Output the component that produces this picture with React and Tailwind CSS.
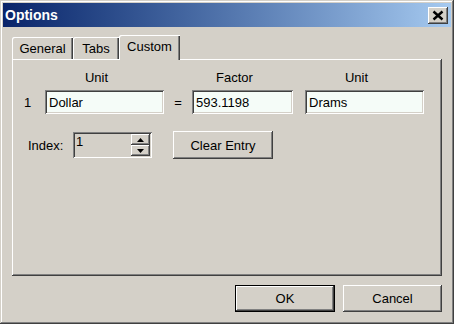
const raised = "shadow-[inset_-1px_-1px_#404040,inset_1px_1px_#ffffff,inset_-2px_-2px_#808080,inset_2px_2px_#d4d0c8]";
const sunken = "shadow-[inset_1px_1px_#808080,inset_-1px_-1px_#ffffff,inset_2px_2px_#404040,inset_-2px_-2px_#d4d0c8]";

function TextBox({ value, width }) {
  return (
    <div className={`${width} h-[24px] bg-[#f5fcf8] ${sunken} flex items-center pl-[4px]`}>
      {value}
    </div>
  );
}

function Tab({ label, width, active }) {
  if (active) {
    return (
      <div className={`${width} h-[25px] -mb-px relative z-10 bg-[#d4d0c8] rounded-tl-[2px] shadow-[inset_1px_1px_#ffffff,inset_-1px_0_#404040,inset_-2px_0_#808080] flex justify-center pt-[4px]`}>
        {label}
      </div>
    );
  }
  return (
    <div className={`${width} h-[22px] bg-[#d4d0c8] rounded-tl-[2px] shadow-[inset_1px_1px_#ffffff,inset_-1px_0_#404040,inset_-2px_0_#808080] flex justify-center pt-[4px]`}>
      {label}
    </div>
  );
}

export default function App() {
  return (
    <div className={`w-[454px] h-[324px] bg-[#d4d0c8] p-[3px] flex flex-col font-['Liberation_Sans',Arial,sans-serif] text-[13px] leading-[15px] text-black select-none shadow-[inset_-1px_-1px_#404040,inset_1px_1px_#d4d0c8,inset_-2px_-2px_#808080,inset_2px_2px_#ffffff]`}>
      {/* title bar */}
      <div className="h-[24px] flex items-center justify-between bg-linear-to-r from-[#0a246a] to-[#a6caf0] pl-[2px] pr-[3px]">
        <span className="text-white font-bold text-[14px]">Options</span>
        <div className={`w-[20px] h-[17px] bg-[#d4d0c8] ${raised} flex items-center justify-center`}>
          <svg width="12" height="11" viewBox="0 0 12 11">
            <path d="M1.5 1.5 L10.5 9.5 M10.5 1.5 L1.5 9.5" stroke="#000" strokeWidth="2.4" />
          </svg>
        </div>
      </div>

      <div className="flex-1 flex flex-col px-[9px] pt-[8px] pb-[9px]">
        {/* tabs */}
        <div className="h-[24px] flex items-end">
          <Tab label="General" width="w-[61px]" />
          <Tab label="Tabs" width="w-[46px]" />
          <Tab label="Custom" width="w-[61px]" active />
        </div>

        {/* panel */}
        <div className={`h-[217px] ${raised} pt-[11px]`}>
          <div className="flex pl-[33px]">
            <div className="w-[103px] text-center">Unit</div>
            <div className="w-[44px]" />
            <div className="w-[85px] text-center">Factor</div>
            <div className="w-[28px]" />
            <div className="w-[103px] text-center">Unit</div>
          </div>

          <div className="flex items-center pl-[12px] mt-[5px]">
            <div className="w-[21px]">1</div>
            <TextBox value="Dollar" width="w-[119px]" />
            <div className="w-[28px] text-center">=</div>
            <TextBox value="593.1198" width="w-[101px]" />
            <div className="w-[12px]" />
            <TextBox value="Drams" width="w-[119px]" />
          </div>

          <div className="flex items-center pl-[16px] mt-[17px]">
            <div className="w-[35px]">Index:</div>
            <div className={`ml-[10px] w-[79px] h-[26px] ${sunken} flex`}>
              <div className="flex-1 pl-[3px] pt-[2px]">1</div>
              <div className="w-[19px] flex flex-col py-[2px] mr-[2px]">
                <div className={`flex-1 bg-[#d4d0c8] ${raised} flex items-center justify-center`}>
                  <svg width="7" height="4" viewBox="0 0 7 4"><path d="M3.5 0 L7 4 L0 4 Z" fill="#000" /></svg>
                </div>
                <div className={`flex-1 bg-[#d4d0c8] ${raised} flex items-center justify-center`}>
                  <svg width="7" height="4" viewBox="0 0 7 4"><path d="M0 0 L7 0 L3.5 4 Z" fill="#000" /></svg>
                </div>
              </div>
            </div>
            <div className={`ml-[21px] w-[100px] h-[28px] ${raised} flex items-center justify-center`}>
              Clear Entry
            </div>
          </div>
        </div>

        {/* dialog buttons */}
        <div className="mt-[9px] flex justify-end gap-[8px]">
          <div className="w-[100px] h-[27px] border border-black">
            <div className={`w-full h-full ${raised} flex items-center justify-center`}>OK</div>
          </div>
          <div className={`w-[99px] h-[27px] ${raised} flex items-center justify-center`}>Cancel</div>
        </div>
      </div>
    </div>
  );
}
